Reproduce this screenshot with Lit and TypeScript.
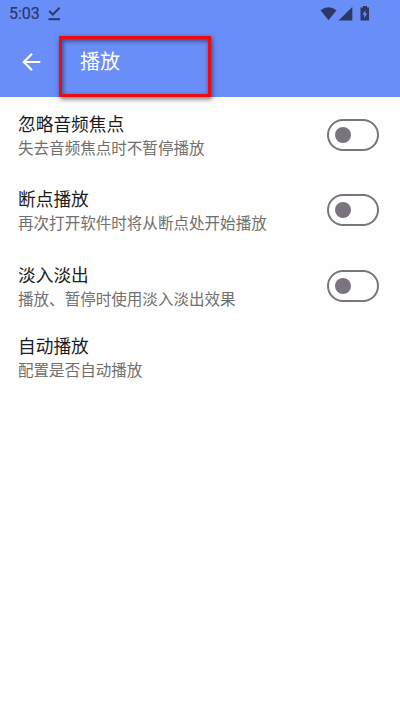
import { LitElement, html, css } from "lit";
import { customElement, property, state } from "lit/decorators.js";

@customElement("toggle-switch")
class ToggleSwitch extends LitElement {
  @property({ type: Boolean, reflect: true }) on = false;

  static styles = css`
    :host { display: block; flex: none; }
    .track {
      box-sizing: border-box; display: flex; align-items: center;
      width: 52px; height: 32px; padding: 0 6px;
      border: 2px solid #79747e; border-radius: 16px; background: #fff;
    }
    .thumb { width: 16px; height: 16px; border-radius: 50%; background: #79747e; }
    :host([on]) .track { justify-content: flex-end; background: #6a8ef8; border-color: #6a8ef8; }
    :host([on]) .thumb { background: #fff; }
  `;

  render() {
    return html`<div class="track" role="switch" aria-checked=${this.on}><div class="thumb"></div></div>`;
  }
}

interface Setting {
  title: string;
  summary: string;
  on?: boolean;
}

@customElement("app-root")
class AppRoot extends LitElement {
  @state() private settings: Setting[] = [
    { title: "忽略音频焦点", summary: "失去音频焦点时不暂停播放", on: false },
    { title: "断点播放", summary: "再次打开软件时将从断点处开始播放", on: false },
    { title: "淡入淡出", summary: "播放、暂停时使用淡入淡出效果", on: false },
    { title: "自动播放", summary: "配置是否自动播放" },
  ];

  static styles = css`
    :host {
      display: block; position: relative; height: 710px; overflow: hidden;
      background: #fefefe; font-family: "Noto Sans CJK SC", sans-serif;
    }
    svg { display: block; flex: none; }
    .header { height: 97px; background: #6a8ef8; }
    .status {
      display: flex; align-items: center; box-sizing: border-box; height: 27px;
      padding: 0 30px 0 9px; color: #2b3866;
    }
    .time { width: 38px; font: 400 16px/27px Roboto, sans-serif; -webkit-text-stroke: .2px #2b3866; }
    .spacer { flex: 1; }
    .bar { display: flex; align-items: center; height: 70px; padding-left: 21px; color: #fff; }
    .heading { margin: -2px 0 0 38px; font-size: 20px; line-height: 28px; font-weight: 400; }
    .highlight {
      position: absolute; left: 59px; top: 36px; width: 152px; height: 61px;
      box-sizing: border-box; border: 3px solid #ee0a10;
      box-shadow: 1px 2px 5px rgba(0,0,0,.55), inset 1px 2px 5px rgba(0,0,0,.5);
    }
    .list { padding-top: 14px; }
    .row {
      display: flex; align-items: center; justify-content: space-between;
      height: 48px; margin-bottom: 27.4px; padding: 0 21px 0 18px;
    }
    .row:last-child { margin-top: -4.4px; }
    .title { font-size: 17.7px; line-height: 24px; color: #1c1c1c; }
    .summary { font-size: 15.55px; line-height: 24px; color: #70706e; }
  `;

  render() {
    return html`
      <div class="header">
        <div class="status">
          <span class="time">5:03</span>
          <svg width="14" height="15" viewBox="0 0 14 15" fill="none" stroke="currentColor" stroke-width="2">
            <path d="M2.2 5 5.8 8.6 12.6 1.8"/><path d="M1.5 13.2h11.5"/>
          </svg>
          <span class="spacer"></span>
          <svg width="50" height="16" viewBox="0 0 50 16" fill="currentColor">
            <path d="M.5 4.2Q8.5-1.8 16.5 4.2L8.5 14.2Z"/>
            <path d="M32.3 1V14.5H18.5Z"/>
            <path fill-rule="evenodd" d="M43 0h4v1.5h2V14.5h-8.5V1.5H43ZM45.4 4.2 42.3 8.8h1.9v3.4l3.1-4.7h-1.9Z"/>
          </svg>
        </div>
        <div class="bar">
          <svg width="21" height="20" viewBox="0 0 21 20" fill="none" stroke="#fff" stroke-width="2.1">
            <path d="M19.3 10H2.8M11 1.8 2.8 10l8.2 8.2"/>
          </svg>
          <h1 class="heading">播放</h1>
        </div>
      </div>
      <div class="list">
        ${this.settings.map((s) => html`
          <div class="row">
            <div>
              <div class="title">${s.title}</div>
              <div class="summary">${s.summary}</div>
            </div>
            ${s.on === undefined ? "" : html`<toggle-switch ?on=${s.on}></toggle-switch>`}
          </div>`)}
      </div>
      <div class="highlight"></div>
    `;
  }
}
